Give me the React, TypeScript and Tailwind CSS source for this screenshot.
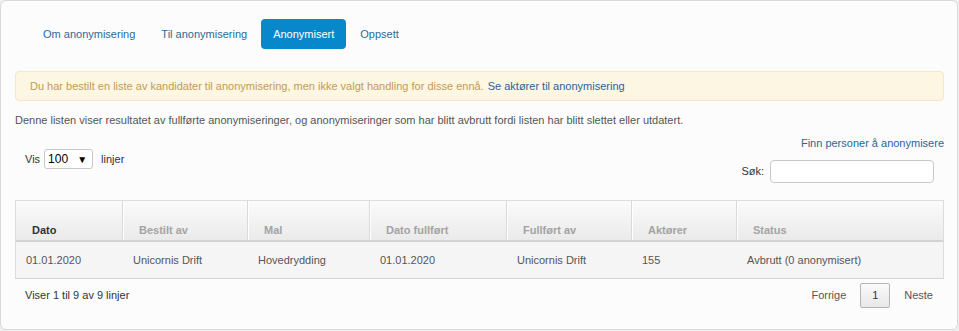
import React from 'react'

const tabs = ['Om anonymisering', 'Til anonymisering', 'Anonymisert', 'Oppsett']

const columns = [
  { label: 'Dato', width: 'w-[107px]', active: true },
  { label: 'Bestilt av', width: 'w-[125px]' },
  { label: 'Mal', width: 'w-[122px]' },
  { label: 'Dato fullført', width: 'w-[137px]' },
  { label: 'Fullført av', width: 'w-[125px]' },
  { label: 'Aktører', width: 'w-[105px]' },
  { label: 'Status', width: '' },
]

const row = [
  '01.01.2020',
  'Unicornis Drift',
  'Hovedrydding',
  '01.01.2020',
  'Unicornis Drift',
  '155',
  'Avbrutt (0 anonymisert)',
]

const App: React.FC = () => {
  return (
    <div className="w-[959px] h-[331px] bg-[#efefef] overflow-hidden font-['Liberation_Sans',Arial,sans-serif] text-[11px]">
      <div className="w-[958px] h-[330px] rounded-md border border-[#d9d9d9] bg-[#fcfcfc] pl-[14px] pr-[13px] pt-[18px]">
        {/* tabs */}
        <nav className="flex gap-[2px] pl-[16px]">
          {tabs.map((t) => (
            <span
              key={t}
              className={
                t === 'Anonymisert'
                  ? 'h-[30px] px-3 flex items-center rounded-[4px] bg-[#0788cb] text-white'
                  : 'h-[30px] px-3 flex items-center text-[#2f6a94]'
              }
            >
              {t}
            </span>
          ))}
        </nav>

        <div className="mt-[22px] h-[30px] rounded-[4px] border border-[#f7e8c4] bg-[#fcf6e2] px-[14px] flex items-center text-[#c49a56]">
          Du har bestilt en liste av kandidater til anonymisering, men ikke valgt handling for disse ennå.
          <span className="ml-1 text-[#2a6496]">Se aktører til anonymisering</span>
        </div>

        <p className="mt-[11px] leading-[16px] text-[#555]">
          Denne listen viser resultatet av fullførte anonymiseringer, og anonymiseringer som har blitt avbrutt fordi listen har blitt slettet eller utdatert.
        </p>

        <div className="mt-[7px] flex justify-between">
          <div className="pl-[10px] mt-[14px] self-start flex items-center gap-[4px] text-[#333]">
            <span>Vis</span>
            <span className="w-[49px] h-[20px] border border-[#c8c8c8] rounded-[3px] bg-white flex items-center justify-between px-[3px] text-[12px] text-black">
              <span>100</span>
              <span className="text-[10px] pr-[2px]">▼</span>
            </span>
            <span className="ml-[4px]">linjer</span>
          </div>
          <div className="flex flex-col items-end">
            <span className="leading-[16px] text-[#2a6496]">Finn personer å anonymisere</span>
            <div className="mt-[9px] mr-[10px] flex items-center gap-[6px] text-[#333]">
              <span>Søk:</span>
              <span className="w-[164px] h-[23px] border border-[#c8c8c8] rounded-[4px] bg-white" />
            </div>
          </div>
        </div>

        {/* table */}
        <div className="mt-[17px] border border-[#dcdcdc] border-b-[#d4d4d4]">
          <div className="flex h-[41px] bg-gradient-to-b from-[#fbfbfb] to-[#eaeaea] border-b-2 border-[#d3d3d3]">
            {columns.map((c, i) => (
              <div
                key={c.label}
                className={`${c.width || 'flex-1'} flex items-end pb-[2px] pl-[16px] font-bold ${
                  i < columns.length - 1 ? 'border-r border-[#dadada] shadow-[1px_0_0_#ffffff]' : ''
                } ${c.active ? 'text-[#333]' : 'text-[#a3a3a3]'}`}
              >
                {c.label}
              </div>
            ))}
          </div>
          <div className="flex h-[36px] items-center bg-[#f5f5f5] text-[#555]">
            {row.map((v, i) => (
              <div key={i} className={`${columns[i].width || 'flex-1'} pl-[10px]`}>
                {v}
              </div>
            ))}
          </div>
        </div>

        <div className="mt-[4px] flex justify-between items-center">
          <span className="pl-[10px] text-[#333]">Viser 1 til 9 av 9 linjer</span>
          <div className="flex items-center pr-[11px] text-[#555]">
            <span>Forrige</span>
            <span className="ml-[14px] w-[30px] h-[25px] flex items-center justify-center border border-[#b5b5b5] rounded-[2px] bg-gradient-to-b from-[#fafafa] to-[#e8e8e8] text-[#333]">
              1
            </span>
            <span className="ml-[14px]">Neste</span>
          </div>
        </div>
      </div>
    </div>
  )
}

export default App
